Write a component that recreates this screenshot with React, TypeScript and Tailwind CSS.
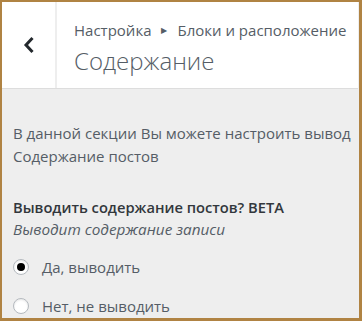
export default function App() {
  return (
    <div className="h-[321px] w-[362px] overflow-hidden bg-[#b08343] pb-[3px] pl-[2px] pr-[3px] pt-[2px] font-['Open_Sans',sans-serif]">
      <div className="flex h-full flex-col bg-[#eeeeee] pr-[1px]">
        <header className="flex h-[87px] shrink-0 border-b border-[#dddddd] bg-white">
          <button className="flex w-[55px] shrink-0 items-center justify-center border-r-2 border-[#eeeeee] text-[#23282d]">
            <svg width="12" height="18" viewBox="0 0 12 18" fill="none">
              <path d="M8.5 3 L3 9 L8.5 15" stroke="currentColor" strokeWidth="3" strokeLinecap="square" />
            </svg>
          </button>
          <div className="flex flex-col pl-[17px] pt-[17px]">
            <div className="flex items-center text-[15px] leading-[22px] text-[#555d66]">
              <span>Настройка</span>
              <span className="mx-[10px] text-[8px]">▶</span>
              <span>Блоки и расположение</span>
            </div>
            <h1 className="mt-[4px] text-[24px] font-light leading-[32px] text-[#555d66]">Содержание</h1>
          </div>
        </header>
        <section className="flex flex-col pl-[11px] pt-[33px] text-[15px] text-[#555d66]">
          <p className="leading-[23px]">
            В данной секции Вы можете настроить вывод
            <br />
            Содержание постов
          </p>
          <h2 className="mt-[28px] text-[14.7px] font-semibold leading-[22px] text-[#32373c]">
            Выводить содержание постов? BETA
          </h2>
          <p className="text-[15.3px] italic leading-[23px]">Выводит содержание записи</p>
          <label className="mt-[15px] flex items-center gap-[13px] leading-[22px]">
            <span className="flex h-[16px] w-[16px] items-center justify-center rounded-full border border-[#b4b9be] bg-white shadow-[inset_0_1px_2px_rgba(0,0,0,0.1)]">
              <span className="h-[8px] w-[8px] rounded-full bg-black" />
            </span>
            Да, выводить
          </label>
          <label className="mt-[17px] flex items-center gap-[13px] leading-[22px]">
            <span className="h-[16px] w-[16px] rounded-full border border-[#b4b9be] bg-white shadow-[inset_0_1px_2px_rgba(0,0,0,0.1)]" />
            Нет, не выводить
          </label>
        </section>
      </div>
    </div>
  );
}
